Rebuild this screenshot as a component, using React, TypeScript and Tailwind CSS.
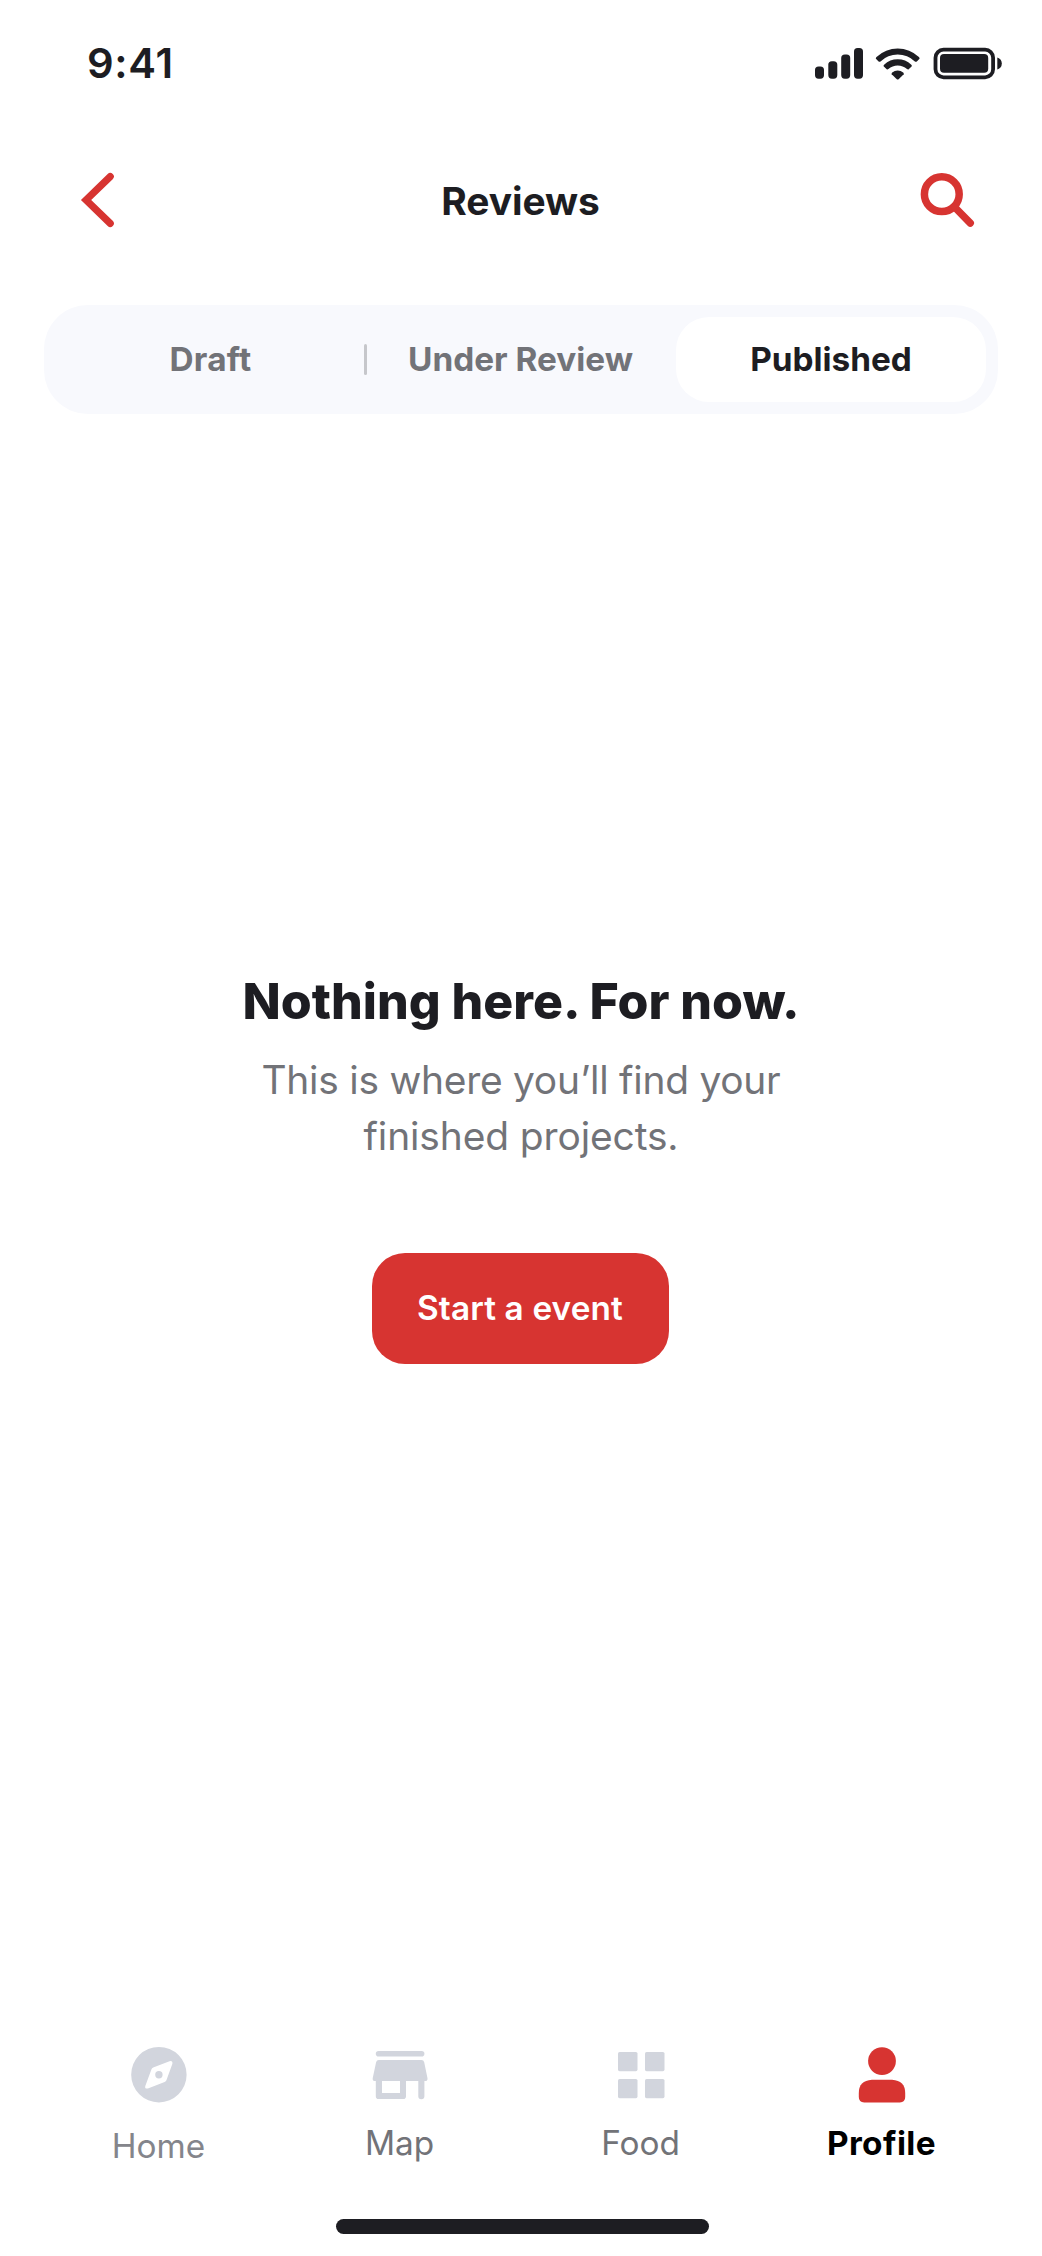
import type { ReactNode } from "react";

function StatusBar() {
  return (
    <div className="flex h-[126px] items-center justify-between pr-10 pl-[87px]">
      <span className="pt-[2px] text-[41.7px] leading-none font-semibold tracking-[0.7px]">9:41</span>
      <svg className="h-[34px] w-[190px]" viewBox="812 46.5 190 34" fill="currentColor">
        <rect x="815" y="67" width="9" height="12.2" rx="3.6" />
        <rect x="828.3" y="61.7" width="9" height="17.5" rx="3.6" />
        <rect x="841.2" y="55" width="9" height="24.2" rx="3.6" />
        <rect x="854" y="48.5" width="9" height="30.7" rx="3.6" />
        <path d="M875.9 59.2 Q875.6 58.2 876.5 57.4 A31 31 0 0 1 918.9 57.4 Q919.8 58.2 919.5 59.2 L916.8 62 Q915.8 62.7 914.9 61.9 A25 25 0 0 0 880.5 61.9 Q879.6 62.7 878.6 62Z" />
        <path d="M883.6 66.8 Q883.3 66 884.1 65.2 A20 20 0 0 1 911.3 65.2 Q912.1 66 911.8 66.8 L908.7 69.8 Q907.9 70.3 907 69.6 A14 14 0 0 0 888.4 69.6 Q887.5 70.3 886.7 69.8Z" />
        <path d="M891.7 74.8 Q891.3 73.8 892.2 73 A8.6 8.6 0 0 1 903.2 73 Q904.1 73.8 903.7 74.8 L898.6 79.7 Q897.7 80.5 896.8 79.7Z" />
        <rect x="935.5" y="50.2" width="57.6" height="27.6" rx="8" fill="none" stroke="currentColor" strokeWidth="3.8" />
        <rect x="940" y="54.4" width="48.2" height="18.8" rx="4" />
        <path d="M997.3 58 Q1001.8 59.6 1001.8 64 T997.3 70Z" />
      </svg>
    </div>
  );
}

function Header() {
  return (
    <header className="flex h-[150px] items-center justify-between pr-[67px] pl-[80px] text-[#d73431]">
      <svg className="mb-[2px] h-[56px] w-[36px]" viewBox="80 172 36 56" fill="none" stroke="currentColor" strokeWidth="7.2">
        <path d="M110.2 176.6 L86.1 200 L110.2 223.4" strokeLinecap="round" />
      </svg>
      <h1 className="ml-[6px] text-[38.9px] leading-none font-bold tracking-[-0.05px] text-[#1d1d22]">Reviews</h1>
      <svg className="mb-[2px] h-[58px] w-[56px]" viewBox="919 171 56 58" fill="none" stroke="currentColor">
        <circle cx="941.8" cy="194.2" r="17.4" strokeWidth="7.5" />
        <path d="M954.5 207 L970.3 223.1" strokeWidth="7.4" strokeLinecap="round" />
      </svg>
    </header>
  );
}

function Tabs() {
  return (
    <div className="mx-[44px] mt-[29px] grid h-[109px] grid-cols-3 rounded-[44px] bg-[#f8f9fd] px-3 pt-[11.5px] pb-[12px] text-[33.34px] leading-none font-bold text-[#727378]">
      <button className="relative flex items-center justify-center pr-px tracking-[0.3px]">
        Draft
        <span className="absolute top-[27.5px] -right-px h-[31px] w-[3px] rounded-full bg-[#c6c7cb]" />
      </button>
      <button className="flex items-center justify-center pr-px whitespace-nowrap">Under Review</button>
      <button className="flex items-center justify-center rounded-[33px] bg-white text-[#1d1d22]">Published</button>
    </div>
  );
}

function EmptyState() {
  return (
    <main className="mt-[552px] flex flex-col items-center text-center">
      <h2 className="text-[50px] leading-[70px] font-extrabold text-[#1d1d22]">
        Nothing here. For now.
      </h2>
      <p className="mt-4 flex flex-col text-[38.9px] leading-[55.5px] text-[#727378]">
        <span className="tracking-[-0.25px]">This is where you’ll find your</span>
        <span className="tracking-[-0.1px]">finished projects.</span>
      </p>
      <button className="mt-[89.5px] mr-px flex h-[111px] w-[297px] items-center justify-center rounded-[33px] bg-[#d73431] pt-px pr-px text-[33.34px] leading-none font-semibold tracking-[0.13px] text-white">
        Start a event
      </button>
    </main>
  );
}

function NavItem({ label, className, children }: { label: string; className: string; children: ReactNode }) {
  return (
    <a className="flex flex-col items-center">
      <svg className="h-[60px] w-[60px]" viewBox="0 0 60 60" fill="#d2d5dd">
        {children}
      </svg>
      <span className={`text-[33.34px] leading-10 ${className}`}>{label}</span>
    </a>
  );
}

function BottomNav() {
  return (
    <nav className="mr-[40px] ml-[38px] mt-auto grid h-[174px] grid-cols-4">
      <NavItem label="Home" className="mt-[20.5px] text-[#84858b]">
        <path
          fillRule="evenodd"
          d="M29.9 2a27.7 27.7 0 1 0 0 55.4a27.7 27.7 0 1 0 0-55.4ZM40.5 16.2Q43.8 15.3 43.4 18.8L37.4 35.2Q36.9 36.5 35.6 37L18.9 43.5Q15.5 44.2 16.3 40.9L22.4 24.4Q22.9 23.1 24.2 22.6ZM29.9 26a3.7 3.7 0 1 0 0 7.4a3.7 3.7 0 1 0 0-7.4Z"
        />
      </NavItem>
      <NavItem label="Map" className="mt-[17.5px] text-[#727378]">
        <rect x="5.8" y="6" width="48.6" height="5.6" rx="2.8" />
        <path
          fillRule="evenodd"
          d="M8.8 15H51.5Q53.7 15 54.2 17.3L57.5 33.2Q57.8 36 55.3 36H54.4V51.2a3 3 0 0 1-6.1 0V36H36V51.2Q36 54 33.2 54H8.6Q5.8 54 5.8 51.2V36H5Q2.3 36 2.7 33.2L6.1 17.3Q6.6 15 8.8 15ZM12 36V48H30V36Z"
        />
      </NavItem>
      <NavItem label="Food" className="mt-[17.5px] text-[#727378]">
        <rect x="7" y="7" width="19.5" height="19.2" rx="1.6" />
        <rect x="34" y="7" width="19.5" height="19.2" rx="1.6" />
        <rect x="7" y="34" width="19.5" height="19.2" rx="1.6" />
        <rect x="34" y="34" width="19.5" height="19.2" rx="1.6" />
      </NavItem>
      <NavItem label="Profile" className="mt-[17.5px] font-bold tracking-[0.4px] text-black">
        <g fill="#d73431">
          <circle cx="30" cy="16.1" r="13.9" />
          <path d="M19.9 34.7H40.1Q53.2 35.6 53.2 48V52Q53.2 57.4 47.8 57.4H12.2Q6.8 57.4 6.8 52V48Q6.8 35.6 19.9 34.7Z" />
        </g>
      </NavItem>
    </nav>
  );
}

export default function App() {
  return (
    <div className="flex h-[2256px] w-[1042px] flex-col bg-white font-['Inter',sans-serif] text-[#1d1d22]">
      <StatusBar />
      <Header />
      <Tabs />
      <EmptyState />
      <BottomNav />
      <div className="mb-[22.5px] ml-[336px] h-[14.5px] w-[372.5px] rounded-full bg-[#1d1d22]" />
    </div>
  );
}
